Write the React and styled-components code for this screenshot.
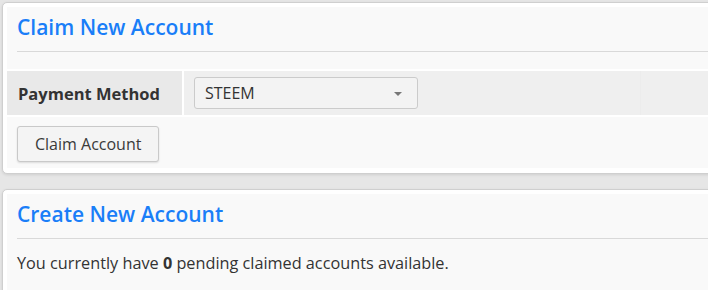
import React from "react";
import styled, { createGlobalStyle } from "styled-components";

const GlobalStyle = createGlobalStyle`
  html, body {
    margin: 0;
    background: #e6e6e6;
    overflow: hidden;
  }
  body {
    padding: 2px 0 0 2px;
    font-family: "Open Sans", "Liberation Sans", sans-serif;
    color: #333;
  }
`;

const Page = styled.div`
  width: 740px;
`;

const Card = styled.section`
  display: flex;
  flex-direction: column;
  gap: 2px;
  background: #fff;
  border: 1px solid #cfcfcf;
  border-radius: 5px;
  padding: 4px 4px 5px;
  margin-bottom: 15px;
  box-shadow: 0 1px 3px rgba(0, 0, 0, 0.1);
`;

const Panel = styled.div`
  background: #f9f9f9;
  padding: ${(p) => p.$pad || "8px 10px 17px"};
`;

const Title = styled.h2`
  margin: 0;
  font-size: 21px;
  line-height: 24px;
  font-weight: 600;
  color: #1a7ef8;
`;

const Divider = styled.hr`
  margin: 12px 0 0;
  border: 0;
  border-top: 1px solid #d9d9d9;
  height: 0;
`;

const FormRow = styled.div`
  display: grid;
  grid-template-columns: 176px 457px 1fr;
  height: 44px;
`;

const Label = styled.div`
  display: flex;
  align-items: center;
  padding-left: 11px;
  background: #e9e9e9;
  margin-right: 1px;
  font-size: 16.5px;
  font-weight: 700;
  color: #333;
`;

const Field = styled.div`
  display: flex;
  align-items: center;
  padding-left: 10px;
  background: #efefef;
  border-left: 1px solid ${(p) => (p.$filler ? "#ececec" : "#fff")};
`;

const Select = styled.div`
  position: relative;
  display: flex;
  align-items: center;
  box-sizing: border-box;
  width: 224px;
  height: 32px;
  padding: 0 10px;
  background: #f3f3f3;
  border: 1px solid #cbcbcb;
  border-radius: 3px;
  font-size: 16px;
  color: #333;
`;

const Caret = styled.span`
  position: absolute;
  right: 15px;
  top: 14px;
  width: 0;
  height: 0;
  border-left: 4px solid transparent;
  border-right: 4px solid transparent;
  border-top: 4px solid #777;
`;

const Button = styled.button`
  box-sizing: border-box;
  height: 36px;
  padding: 0 17px;
  background: #f4f4f4;
  border: 1px solid #c9c9c9;
  border-radius: 3px;
  box-shadow: 0 1px 2px rgba(0, 0, 0, 0.12);
  font-family: inherit;
  font-size: 16px;
  color: #3a3a3a;
  cursor: pointer;
`;

const Text = styled.p`
  margin: 12px 0 0;
  font-size: 16.25px;
  line-height: 24px;
  color: #333;
`;

export default function App() {
  return (
    <Page>
      <GlobalStyle />
      <Card>
        <Panel>
          <Title>Claim New Account</Title>
          <Divider />
        </Panel>
        <FormRow>
          <Label>Payment Method</Label>
          <Field>
            <Select>
              STEEM
              <Caret />
            </Select>
          </Field>
          <Field $filler />
        </FormRow>
        <Panel $pad="9px 10px 6px">
          <Button>Claim Account</Button>
        </Panel>
      </Card>
      <Card>
        <Panel $pad="8px 10px 40px">
          <Title>Create New Account</Title>
          <Divider />
          <Text>
            You currently have <b>0</b> pending claimed accounts available.
          </Text>
        </Panel>
      </Card>
    </Page>
  );
}
